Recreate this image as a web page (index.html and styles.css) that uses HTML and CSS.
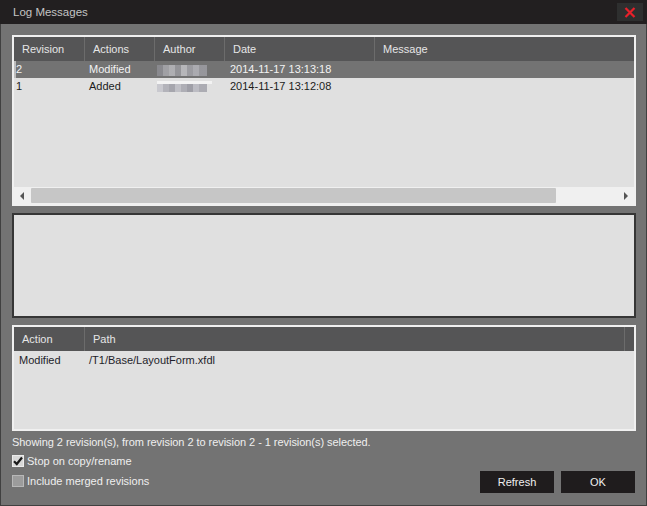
FILE: index.html
```html
<!DOCTYPE html>
<html>
<head>
<meta charset="utf-8">
<link rel="stylesheet" href="styles.css">
</head>
<body>
<div class="window">
  <div class="titlebar">
    <span class="title">Log Messages</span>
    <button class="close" aria-label="Close">
      <svg width="12" height="11" viewBox="0 0 12 11"><path d="M1.5 1 L10.5 10 M10.5 1 L1.5 10" stroke="#e8202a" stroke-width="2.2" fill="none"/></svg>
    </button>
  </div>
  <div class="body">
    <div class="list list-top">
      <div class="thead cols-top">
        <div class="th">Revision</div>
        <div class="th">Actions</div>
        <div class="th">Author</div>
        <div class="th">Date</div>
        <div class="th last">Message</div>
      </div>
      <div class="tbody">
        <div class="tr cols-top selected">
          <div class="td c-rev">2</div>
          <div class="td c-act">Modified</div>
          <div class="td c-auth"><span class="blur blur-a"></span></div>
          <div class="td c-date">2014-11-17 13:13:18</div>
          <div class="td"></div>
        </div>
        <div class="tr cols-top">
          <div class="td c-rev">1</div>
          <div class="td c-act">Added</div>
          <div class="td c-auth"><span class="blur blur-b"></span></div>
          <div class="td c-date">2014-11-17 13:12:08</div>
          <div class="td"></div>
        </div>
      </div>
      <div class="hscroll">
        <div class="sarrow"><svg width="5" height="8" viewBox="0 0 5 8"><path d="M4 0 L0 4 L4 8 Z" fill="#555"/></svg></div>
        <div class="trough"><div class="thumb"></div></div>
        <div class="sarrow"><svg width="5" height="8" viewBox="0 0 5 8"><path d="M1 0 L5 4 L1 8 Z" fill="#555"/></svg></div>
      </div>
    </div>

    <div class="msgbox"></div>

    <div class="list list-bottom">
      <div class="thead cols-bottom">
        <div class="th">Action</div>
        <div class="th">Path</div>
        <div class="th last"></div>
      </div>
      <div class="tbody">
        <div class="tr cols-bottom">
          <div class="td p-act">Modified</div>
          <div class="td p-path">/T1/Base/LayoutForm.xfdl</div>
          <div class="td"></div>
        </div>
      </div>
    </div>

    <div class="status">Showing 2 revision(s), from revision 2 to revision 2 - 1 revision(s) selected.</div>

    <div class="footer">
      <div class="checks">
        <label class="check">
          <span class="box checked"><svg width="10" height="10" viewBox="0 0 10 10"><path d="M1 5.2 L3.8 8 L9 1.5" stroke="#1a1a1a" stroke-width="2.2" fill="none"/></svg></span>
          <span>Stop on copy/rename</span>
        </label>
        <label class="check">
          <span class="box"></span>
          <span>Include merged revisions</span>
        </label>
      </div>
      <div class="buttons">
        <button class="btn">Refresh</button>
        <button class="btn">OK</button>
      </div>
    </div>
  </div>
</div>
</body>
</html>
```

FILE: styles.css
```css
html, body {
  margin: 0;
  padding: 0;
  background: #737373;
}

.window {
  width: 647px;
  height: 506px;
  display: flex;
  flex-direction: column;
  font-family: "Liberation Sans", Arial, sans-serif;
  font-size: 11px;
  background: #737373;
  overflow: hidden;
}

.titlebar {
  height: 24px;
  flex: none;
  background: #221f20;
  display: flex;
  align-items: center;
  justify-content: space-between;
  padding: 0 4px 0 13px;
}

.title {
  color: #c4c4c4;
  font-size: 11.5px;
}

.close {
  width: 26px;
  height: 18px;
  padding: 0;
  border: 0;
  background: #2e2f2f;
  display: flex;
  align-items: center;
  justify-content: center;
}

.body {
  flex: 1;
  display: flex;
  flex-direction: column;
  padding: 11px 10px 0 11px;
  border: 1px solid #404040;
  border-top: 0;
}

.list {
  box-sizing: border-box;
  border: 2px solid #f0f0f0;
  background: #e0e0e0;
  display: flex;
  flex-direction: column;
}

.list-top {
  height: 171px;
}

.list-bottom {
  height: 106px;
  margin-top: 7px;
}

.thead {
  height: 24px;
  flex: none;
  background: #555556;
  color: #e6e6e6;
}

.cols-top {
  display: grid;
  grid-template-columns: 71px 70px 70px 150px 1fr;
}

.cols-bottom {
  display: grid;
  grid-template-columns: 71px 540px 1fr;
}

.th {
  box-sizing: border-box;
  padding-left: 8px;
  line-height: 24px;
  border-right: 1px solid #6c6c6c;
  white-space: nowrap;
}

.th.last {
  border-right: 0;
}

.tbody {
  flex: 1;
}

.tr {
  height: 17px;
  line-height: 17px;
  color: #1c1c1c;
}

.tr.selected {
  background: #737373;
  color: #f2f2f2;
  box-shadow: inset 2px 0 0 #bdbdbd;
}

.td {
  white-space: nowrap;
  overflow: hidden;
}

.c-rev { padding-left: 2px; }
.c-act { padding-left: 4px; }
.c-auth { padding-left: 2px; }
.c-date { padding-left: 5px; }

.blur {
  display: inline-block;
  width: 50px;
  height: 11px;
  vertical-align: middle;
}

.blur-a {
  background: linear-gradient(90deg,
    #8d8d93 0 6px, #a8a8ad 6px 12px, #b9b9bd 12px 18px, #9a9a9f 18px 24px,
    #c2c2c6 24px 30px, #a2a2a8 30px 36px, #b4b4ba 36px 42px, #9d9da3 42px 50px);
  opacity: 0.85;
}

.blur-b {
  background:
    linear-gradient(#f3f3f3, #f3f3f3) 0 0 / 55px 3px no-repeat,
    linear-gradient(90deg,
    #c9c9cf 0 6px, #b3b3ba 6px 12px, #a6a6ad 12px 18px, #c0c0c6 18px 24px,
    #aeaeb5 24px 30px, #9f9fa7 30px 36px, #bcbcc3 36px 42px, #acacb3 42px 50px) 0 3px / 50px 8px no-repeat;
  width: 55px;
  margin-top: -2px;
}

.p-act { padding-left: 5px; }
.p-path { padding-left: 4px; }

.list-bottom .tr {
  height: 18px;
  line-height: 18px;
  color: #1e1e2a;
}

.hscroll {
  height: 17px;
  flex: none;
  background: #f0f0f0;
  display: flex;
  align-items: center;
}

.sarrow {
  width: 17px;
  height: 17px;
  display: flex;
  align-items: center;
  justify-content: center;
}

.trough {
  flex: 1;
  height: 15px;
}

.thumb {
  width: 525px;
  height: 15px;
  background: #c6c6c6;
  border-radius: 1px;
}

.msgbox {
  box-sizing: border-box;
  height: 105px;
  margin-top: 7px;
  border: 2px solid #363636;
  background: #e0e0e0;
}

.status {
  margin-top: 3px;
  height: 16px;
  line-height: 16px;
  color: #efefef;
  white-space: nowrap;
  letter-spacing: -0.05px;
}

.footer {
  display: flex;
  justify-content: space-between;
  align-items: flex-end;
  margin-top: 1px;
}

.checks {
  display: flex;
  flex-direction: column;
}

.check {
  height: 20px;
  display: flex;
  align-items: center;
  gap: 3px;
  color: #efefef;
}

.box {
  box-sizing: border-box;
  width: 12px;
  height: 12px;
  border: 1px solid #b8b8b8;
  background: #9c9c9c;
  display: flex;
  align-items: center;
  justify-content: center;
}

.box.checked {
  background: #d8d8d8;
  border-color: #ececec;
}

.buttons {
  display: flex;
  gap: 7px;
  margin-right: 1px;
  margin-bottom: -2px;
}

.btn {
  width: 74px;
  height: 22px;
  border: 0;
  padding: 0;
  background: #1f1c1d;
  color: #f0f0f0;
  font-family: "Liberation Sans", Arial, sans-serif;
  font-size: 11px;
}
```
